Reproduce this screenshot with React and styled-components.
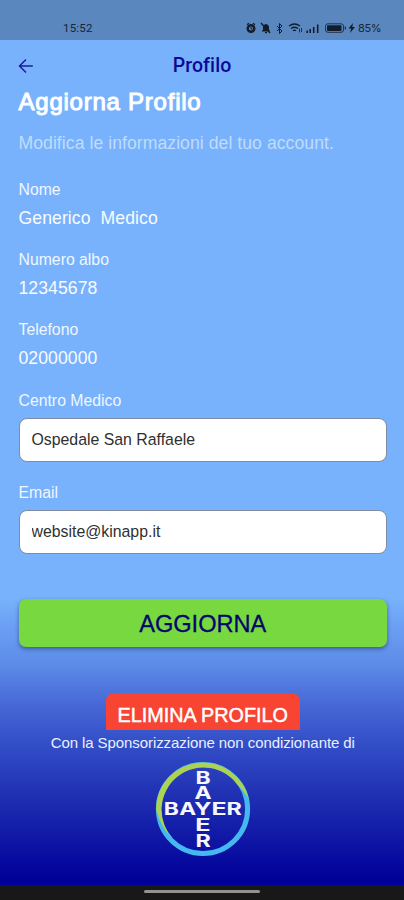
import React from "react";
import styled, { createGlobalStyle } from "styled-components";

const GlobalStyle = createGlobalStyle`
  * { box-sizing: border-box; }
  body { margin: 0; }
`;

const Screen = styled.div`
  width: 404px;
  height: 900px;
  display: flex;
  flex-direction: column;
  overflow: hidden;
  font-family: "Liberation Sans", Arial, sans-serif;
  background: linear-gradient(
    to bottom,
    #78b2fd 0,
    #78b2fd 598px,
    #6da2f5 622px,
    #5c8be7 665px,
    #496cd9 700px,
    #344fc8 742px,
    #2133b5 790px,
    #1119a6 835px,
    #000099 880px
  );
`;

const StatusBar = styled.div`
  height: 40px;
  flex: none;
  display: flex;
  align-items: flex-end;
  justify-content: space-between;
  padding: 0 23px 5px 63px;
  background: #5a87bd;
  color: #172538;
  font: 400 11.5px/14px Roboto, sans-serif;
`;

const Clock = styled.span`
  letter-spacing: 0.2px;
`;

const StatusIcons = styled.svg`
  display: block;
  width: 112px;
  height: 14px;
`;

const StatusGroup = styled.div`
  display: flex;
  gap: 1px;
`;

const Battery = styled.span`
  font: 400 11px/14px Inter, sans-serif;
  letter-spacing: -0.45px;
`;

const Header = styled.header`
  height: 48px;
  flex: none;
  display: grid;
  grid-template-columns: 40px 1fr 40px;
  align-items: center;
  padding: 3px 0 0;
  color: #0a0a96;
`;

const BackButton = styled.button`
  border: 0;
  padding: 0 0 0 18px;
  height: 16px;
  background: none;
  color: #1c1c9e;
  display: block;

  svg { display: block; }
`;

const HeaderTitle = styled.h1`
  margin: 0;
  padding-top: 1px;
  text-align: center;
  font: 500 19.5px/24px Roboto, sans-serif;
  letter-spacing: 0.1px;
`;

const Content = styled.main`
  flex: 1;
  display: flex;
  flex-direction: column;
  padding: 0 17px 0 18.5px;
`;

const Heading = styled.h2`
  margin: 0;
  color: #fff;
  font-size: 24px;
  font-weight: 400;
  -webkit-text-stroke: 1px #fff;
  line-height: 28px;
  letter-spacing: 0.76px;
  white-space: nowrap;
`;

const Intro = styled.p`
  margin: 16px 0 0;
  color: #bfdcfb;
  font-size: 17.6px;
  line-height: 22px;
  letter-spacing: 0.06px;
  white-space: nowrap;
`;

const Fields = styled.div`
  display: flex;
  flex-direction: column;
  padding-top: 26px;
`;

const Field = styled.div`
  height: ${(p) => (p.$boxed ? 92.5 : 70.2)}px;
  display: flex;
  flex-direction: column;
`;

const Label = styled.label`
  color: #f0f7ff;
  font-size: 15.8px;
  line-height: 20px;
`;

const Value = styled.span`
  margin-top: 7px;
  color: #f8fbff;
  font-size: 17.6px;
  line-height: 22px;
  letter-spacing: 0.09px;
  white-space: pre;
`;

const Input = styled.input`
  width: 100%;
  height: 44px;
  margin-top: 7px;
  padding: 0 12px;
  border: 1px solid #7e8ba0;
  border-radius: 8px;
  background: #fff;
  color: #303030;
  font: 15.85px "Liberation Sans", Arial, sans-serif;
  outline: 0;
`;

const UpdateButton = styled.button`
  height: 48px;
  flex: none;
  margin-top: 23.5px;
  border: 0;
  border-radius: 7px;
  background: #77d83f;
  box-shadow: 0 2px 4px rgba(25, 45, 95, 0.55);
  color: #04046f;
  font: 23.6px/48px "Liberation Sans", Arial, sans-serif;
  -webkit-text-stroke: 0.3px #04046f;
`;

const DeleteButton = styled.button`
  align-self: center;
  width: 194px;
  height: 37px;
  flex: none;
  margin-top: 46px;
  padding: 7px 0 0;
  border: 0;
  border-radius: 8px 8px 0 0;
  background: #f74433;
  color: #fff;
  font: 19.8px/24px "Liberation Sans", Arial, sans-serif;
  -webkit-text-stroke: 0.45px #fff;
`;

const Sponsor = styled.footer`
  display: flex;
  flex-direction: column;
  align-items: center;
  color: #e8f0ff;
  font-size: 15px;
  letter-spacing: -0.08px;
  line-height: 20px;
  white-space: nowrap;
  padding-top: 3px;
`;

const Logo = styled.svg`
  display: block;
  width: 96px;
  height: 96px;
  margin-top: 8px;
`;

const NavBar = styled.div`
  height: 15px;
  flex: none;
  display: flex;
  justify-content: center;
  padding-top: 5px;
  background: #181818;
`;

const HomeIndicator = styled.div`
  width: 116px;
  height: 3px;
  border-radius: 2px;
  background: #92938f;
`;

const StatusGlyphs = () => (
  <StatusIcons viewBox="0 0 112 14">
    <g fill="none" stroke="#111d2d" strokeWidth="1.3">
      <path d="M2 3.8 4 2.2M8 2.2 10 3.8" />
      <circle cx="6" cy="7.5" r="3.3" strokeWidth="2.4" />
      <path d="M6 6v2h1.5" strokeWidth="1" />
      <path d="m16 2 9 10" />
      <path d="m32 5 5 5-2.5 2.5v-10L37 5l-5 5" strokeWidth="1" />
      <path d="M44 5q5.500-4 11 0M46 7.500q3.500-2.500 7 0M48 9.700q1.500-1.200 3 0" strokeWidth="1.4" />
      <path d="M54.500 7.500v4M56.500 7v4" strokeWidth=".8" />
      <path d="M62.200 9.500V12M65.200 8v4M68.700 6v6M72.700 3.500V12" strokeWidth="1.6" />
      <rect x="80.500" y="2.800" width="18" height="8.500" rx="2.400" strokeWidth=".8" />
      <path d="M100.300 5.500v3" strokeWidth="1" />
    </g>
    <g fill="#111d2d">
      <path d="M17 10.500V9.800l1-1V6.500Q18 3.500 21 3q3 .5 3 3.500v2.300l1 1v.7zM20 11h2v1.200h-2z" />
      <rect x="82" y="4.200" width="14.500" height="5.700" rx="1" />
      <path d="m108 2-4.500 5.500h2.700L105 12l5-6h-2.700z" />
    </g>
  </StatusIcons>
);

const letters = [
  ["B", 8.8, 54.2, 15],
  ["A", 24.3, 54.2, 16.8],
  ["Y", 39.3, 54.2, 17],
  ["E", 56.4, 54.2, 15],
  ["R", 71.6, 54.2, 15.2],
  ["B", 40.4, 22.5, 15],
  ["A", 39.4, 38.3, 17],
  ["E", 40.2, 70.3, 15.2],
  ["R", 40.4, 86.4, 15.2],
];

const BayerLogo = () => (
  <Logo viewBox="0 0 96 96" aria-label="Bayer">
    <circle cx="48" cy="48" r="44.600" fill="none" stroke="#45b8ef" strokeWidth="5" />
    <path
      d="M.9 48A47.100 47.100 0 0 1 94 38.500L91 34Q87 28 83.500 25A42.100 42.100 0 1 0 18 77.500Q7 69 .9 48Z"
      fill="#abd252"
    />
    <g
      fill="#f7f8ff"
      fontFamily="Inter, sans-serif"
      fontWeight="700"
      fontSize="16.800"
    >
      {letters.map(([letter, x, y, width]) => (
        <text key={`${x}-${y}`} x={x} y={y} textLength={width} lengthAdjust="spacingAndGlyphs">
          {letter}
        </text>
      ))}
    </g>
  </Logo>
);

export default function App() {
  return (
    <>
      <GlobalStyle />
      <Screen>
        <StatusBar>
          <Clock>15:52</Clock>
          <StatusGroup>
            <StatusGlyphs />
            <Battery>85%</Battery>
          </StatusGroup>
        </StatusBar>
        <Header>
          <BackButton aria-label="Indietro">
            <svg width="16" height="16" viewBox="0 0 16 16" fill="none" stroke="currentColor" strokeWidth="1.5">
              <path d="M14.800 8H2M8 1.500 1.500 8 8 14.500" />
            </svg>
          </BackButton>
          <HeaderTitle>Profilo</HeaderTitle>
        </Header>
        <Content>
          <Heading>Aggiorna Profilo</Heading>
          <Intro>Modifica le informazioni del tuo account.</Intro>
          <Fields>
            <Field><Label>Nome</Label><Value>Generico  Medico</Value></Field>
            <Field><Label>Numero albo</Label><Value>12345678</Value></Field>
            <Field><Label>Telefono</Label><Value>02000000</Value></Field>
            <Field $boxed><Label>Centro Medico</Label><Input defaultValue="Ospedale San Raffaele" /></Field>
            <Field $boxed><Label>Email</Label><Input defaultValue="website@kinapp.it" /></Field>
          </Fields>
          <UpdateButton>AGGIORNA</UpdateButton>
          <DeleteButton>ELIMINA PROFILO</DeleteButton>
          <Sponsor>
            Con la Sponsorizzazione non condizionante di
            <BayerLogo />
          </Sponsor>
        </Content>
        <NavBar><HomeIndicator /></NavBar>
      </Screen>
    </>
  );
}
